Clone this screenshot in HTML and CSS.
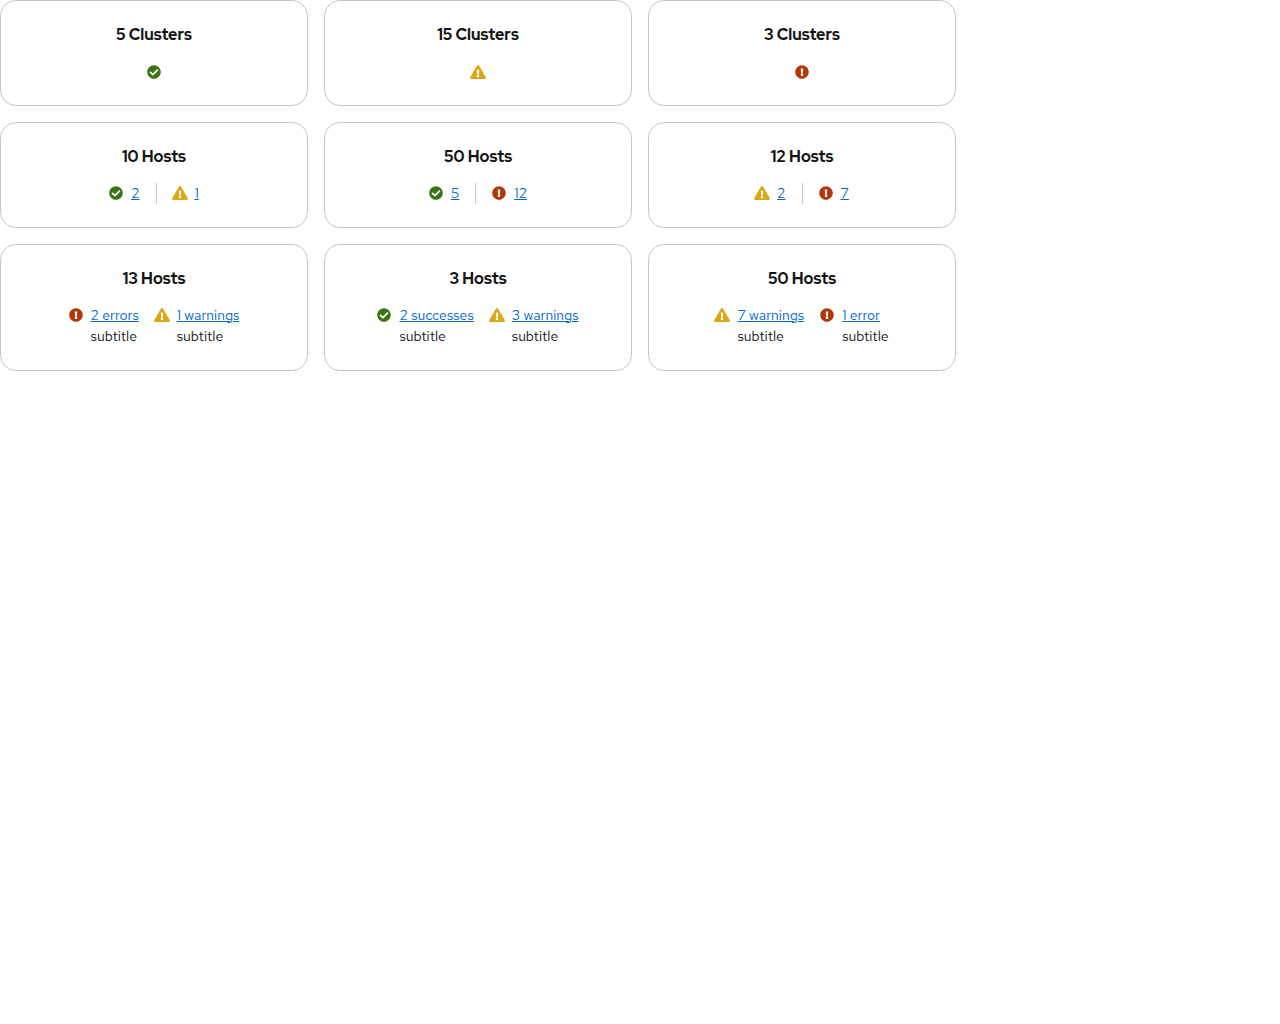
FILE: index.html
```html
<!DOCTYPE html>
<html lang="en">
<head>
<meta charset="utf-8">
<title>Aggregate status cards</title>
<meta name="viewport" content="width=device-width, initial-scale=1">
<link rel="stylesheet" href="styles.css">
</head>
<body>
<svg class="sprite" aria-hidden="true">
  <symbol id="success" viewBox="0 0 512 512"><path d="M504 256c0 136.967-111.033 248-248 248S8 392.967 8 256 119.033 8 256 8s248 111.033 248 248zM227.314 387.314l184-184c6.248-6.248 6.248-16.379 0-22.627l-22.627-22.627c-6.248-6.249-16.379-6.249-22.628 0L216 308.118l-70.059-70.059c-6.248-6.248-16.379-6.248-22.628 0l-22.627 22.627c-6.248 6.248-6.248 16.379 0 22.627l104 104c6.249 6.249 16.379 6.249 22.628.001z"/></symbol>
  <symbol id="danger" viewBox="0 0 512 512"><path d="M504 256c0 136.997-111.043 248-248 248S8 392.997 8 256C8 119.083 119.043 8 256 8s248 111.083 248 248zm-248 50c-25.405 0-46 20.595-46 46s20.595 46 46 46 46-20.595 46-46-20.595-46-46-46zm-43.673-165.346l7.418 136c.347 6.364 5.609 11.346 11.982 11.346h48.546c6.373 0 11.635-4.982 11.982-11.346l7.418-136c.375-6.874-5.098-12.654-11.982-12.654h-63.383c-6.884 0-12.356 5.78-11.981 12.654z"/></symbol>
  <symbol id="warning" viewBox="0 0 576 512"><path d="M569.517 440.013C587.975 472.007 564.806 512 527.94 512H48.054c-36.937 0-59.999-40.055-41.577-71.987L246.423 23.985c18.467-32.009 64.72-31.951 83.154 0l239.94 416.028zM288 354c-25.405 0-46 20.595-46 46s20.595 46 46 46 46-20.595 46-46-20.595-46-46-46zm-43.673-165.346l7.418 136c.347 6.364 5.609 11.346 11.982 11.346h48.546c6.373 0 11.635-4.982 11.982-11.346l7.418-136c.375-6.874-5.098-12.654-11.982-12.654h-63.383c-6.884 0-12.356 5.78-11.981 12.654z"/></symbol>
</svg>
<main class="gallery">
  <div class="column">
    <article class="card">
      <h2 class="title">5 Clusters</h2>
      <div class="body"><span class="status solo"><svg class="icon success" role="img" aria-label="Success"><use href="#success"/></svg></span></div>
    </article>
    <article class="card">
      <h2 class="title">10 Hosts</h2>
      <div class="body">
        <span class="status"><svg class="icon success"><use href="#success"/></svg><a href="#">2</a></span>
        <span class="divider"></span>
        <span class="status"><svg class="icon warning"><use href="#warning"/></svg><a href="#">1</a></span>
      </div>
    </article>
    <article class="card">
      <h2 class="title">13 Hosts</h2>
      <div class="body">
        <div class="status"><svg class="icon danger"><use href="#danger"/></svg><div><a href="#">2 errors</a><div>subtitle</div></div></div>
        <div class="status"><svg class="icon warning"><use href="#warning"/></svg><div><a href="#">1 warnings</a><div>subtitle</div></div></div>
      </div>
    </article>
  </div>
  <div class="column">
    <article class="card">
      <h2 class="title">15 Clusters</h2>
      <div class="body"><span class="status solo"><svg class="icon warning" role="img" aria-label="Warning"><use href="#warning"/></svg></span></div>
    </article>
    <article class="card">
      <h2 class="title">50 Hosts</h2>
      <div class="body">
        <span class="status"><svg class="icon success"><use href="#success"/></svg><a href="#">5</a></span>
        <span class="divider"></span>
        <span class="status"><svg class="icon danger"><use href="#danger"/></svg><a href="#">12</a></span>
      </div>
    </article>
    <article class="card">
      <h2 class="title">3 Hosts</h2>
      <div class="body">
        <div class="status"><svg class="icon success"><use href="#success"/></svg><div><a href="#">2 successes</a><div>subtitle</div></div></div>
        <div class="status"><svg class="icon warning"><use href="#warning"/></svg><div><a href="#">3 warnings</a><div>subtitle</div></div></div>
      </div>
    </article>
  </div>
  <div class="column">
    <article class="card">
      <h2 class="title">3 Clusters</h2>
      <div class="body"><span class="status solo"><svg class="icon danger" role="img" aria-label="Danger"><use href="#danger"/></svg></span></div>
    </article>
    <article class="card">
      <h2 class="title">12 Hosts</h2>
      <div class="body">
        <span class="status"><svg class="icon warning"><use href="#warning"/></svg><a href="#">2</a></span>
        <span class="divider"></span>
        <span class="status"><svg class="icon danger"><use href="#danger"/></svg><a href="#">7</a></span>
      </div>
    </article>
    <article class="card">
      <h2 class="title">50 Hosts</h2>
      <div class="body">
        <div class="status"><svg class="icon warning"><use href="#warning"/></svg><div><a href="#">7 warnings</a><div>subtitle</div></div></div>
        <div class="status"><svg class="icon danger"><use href="#danger"/></svg><div><a href="#">1 error</a><div>subtitle</div></div></div>
      </div>
    </article>
  </div>
</main>
</body>
</html>
```
FILE: styles.css
```css
*,
*::before,
*::after {
  box-sizing: border-box;
}

body {
  margin: 0;
  background: #fff;
  color: #151515;
  font: 14px/21px "Red Hat Text", Lato, sans-serif;
}

.sprite {
  display: none;
}

.gallery {
  display: grid;
  grid-template-columns: repeat(auto-fill, minmax(250px, 1fr));
  gap: 16px;
}

.column {
  display: flex;
  flex-direction: column;
  gap: 16px;
}

.card {
  display: flex;
  flex-direction: column;
  gap: 16px;
  padding: 23px;
  border: 1px solid #c7c7c7;
  border-radius: 16px;
  text-align: center;
}

.title {
  margin: 0;
  font: 800 16px/21px "Red Hat Display", Lato, sans-serif;
}

.body {
  display: flex;
  justify-content: center;
  gap: 16px;
}

.status {
  display: flex;
  gap: 8px;
  min-height: 21px;
  text-align: left;
}

.solo {
  align-items: flex-end;
}

.divider {
  width: 1px;
  background: #c7c7c7;
}

.icon {
  flex: none;
  width: 14px;
  height: 14px;
  margin: 3px 0;
}

.success {
  fill: #3d7317;
}

/* The triangle is wider than the 14px icon box and overhangs it evenly. */
.warning {
  width: 16px;
  margin-inline: -1px;
  fill: #dca614;
}

.danger {
  fill: #b1380b;
}

a {
  color: #06c;
  text-decoration: underline;
  text-decoration-thickness: 1px;
  text-underline-offset: 1px;
}
```
